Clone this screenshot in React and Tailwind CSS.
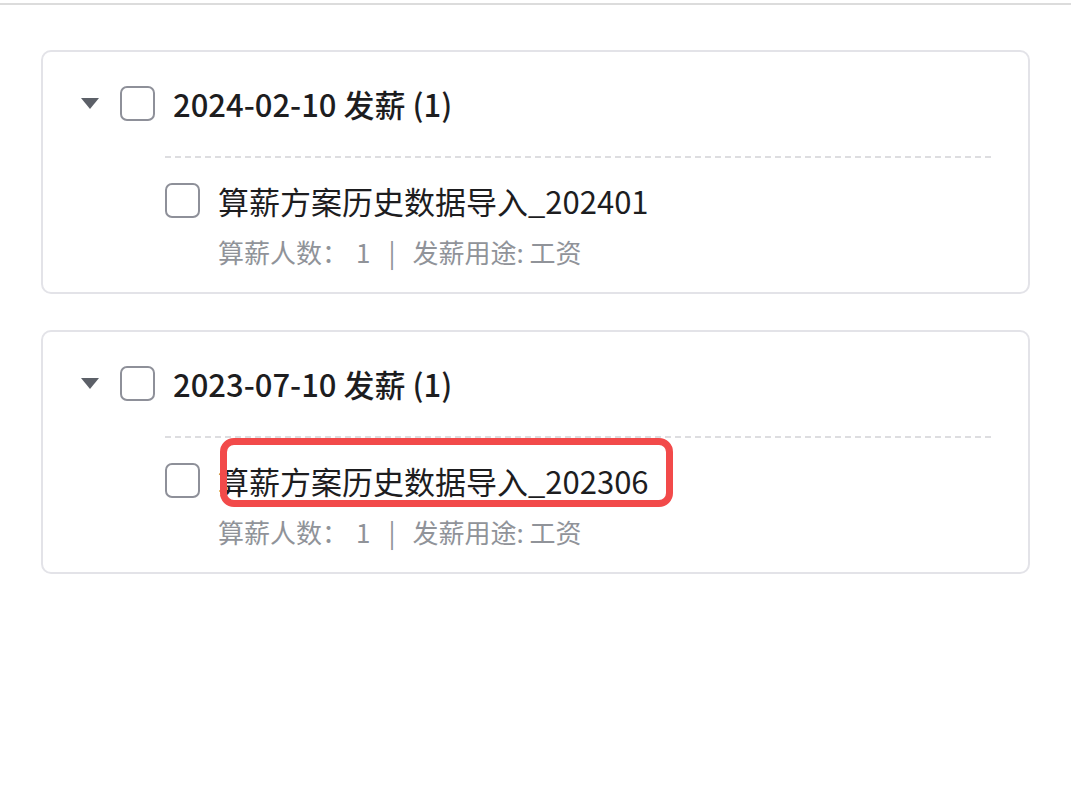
import React from "react";

const batches = [
  {
    id: 1,
    date: "2024-02-10",
    plans: [{ id: 11, name: "算薪方案历史数据导入_202401", count: 1, usage: "工资" }],
  },
  {
    id: 2,
    date: "2023-07-10",
    plans: [{ id: 21, name: "算薪方案历史数据导入_202306", count: 1, usage: "工资", marked: true }],
  },
];

const font = { fontFamily: '"Noto Sans CJK SC", "Noto Sans", sans-serif' };

const Checkbox = () => (
  <span className="block w-[35px] h-[35px] shrink-0 rounded-[7px] border-2 border-[#8e9099] bg-white" />
);

const BatchCard = ({ batch }) => (
  <div className="border-2 border-[#e3e3e8] rounded-[10px] pl-[38px] pr-[35px] pt-[34px] pb-[27px]">
    {/* header */}
    <div className="flex items-center h-[35px]">
      <span className="w-0 h-0 border-l-[9px] border-r-[9px] border-t-[11px] border-l-transparent border-r-transparent border-t-[#5c6068]" />
      <span className="ml-[21px]">
        <Checkbox />
      </span>
      <span className="ml-[18px] text-[31px] font-medium text-[#1d1d1f] leading-none">
        {batch.date} 发薪 ({batch.plans.length})
      </span>
    </div>

    <div className="ml-[84px] mt-[35px] h-[2px] bg-[repeating-linear-gradient(to_right,#dddde0_0,#dddde0_6px,transparent_6px,transparent_10px)]" />

    {batch.plans.map((plan) => (
      <div key={plan.id} className="ml-[84px] mt-[25px]">
        <div className="flex items-center h-[35px]">
          <Checkbox />
          <span className="relative ml-[18px] text-[31px] text-[#1d1d1f] leading-none">
            {plan.name}
            {plan.marked && (
              <span className="absolute left-[2px] -right-[24px] -top-[27px] -bottom-[11px] border-[7px] border-[#f24a4a] rounded-[14px]" />
            )}
          </span>
        </div>
        <div className="ml-[53px] mt-[21px] text-[26px] text-[#909399] leading-none whitespace-pre">
          算薪人数：<span className="ml-[8px]">1</span>
          <span className="ml-[18px] mr-[17px]">|</span>发薪用途: {plan.usage}
        </div>
      </div>
    ))}
  </div>
);

const App = () => {
  return (
    <div className="min-h-screen bg-white" style={font}>
      <div className="pt-[3px]">
        <div className="h-[2px] bg-[#dcdcdc]" />
      </div>
      <div className="px-[41px] pt-[45px] flex flex-col gap-[36px]">
        {batches.map((b) => (
          <BatchCard key={b.id} batch={b} />
        ))}
      </div>
    </div>
  );
};

export default App;
